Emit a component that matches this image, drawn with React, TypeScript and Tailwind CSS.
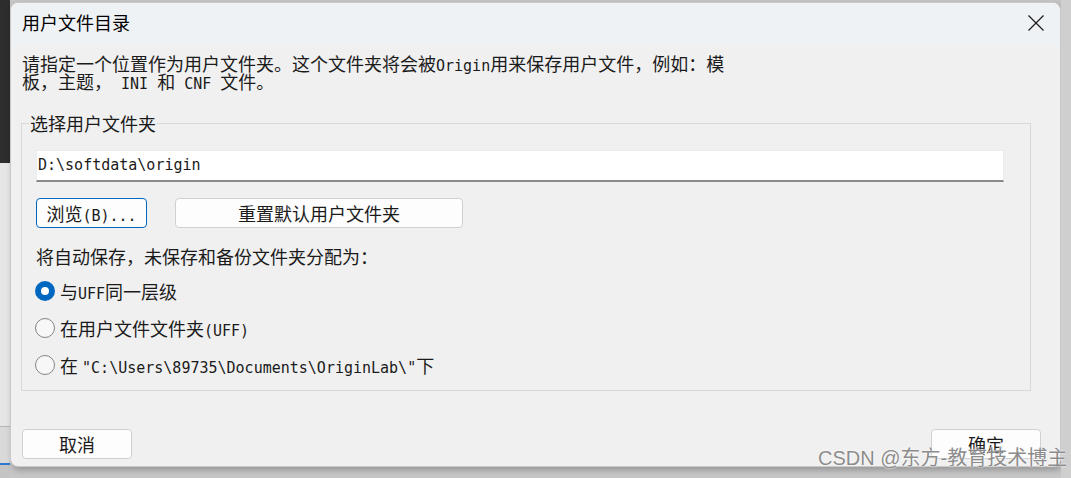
import React from 'react';

const cjk = "font-['Noto_Sans_CJK_SC','Noto_Sans_CJK_JP',sans-serif]";

// latin runs in the dialog are half-width monospace
const L = ({ children }: { children: React.ReactNode }) => (
  <span className="font-['DejaVu_Sans_Mono',monospace] text-[15px] leading-[1px]">{children}</span>
);

const Radio = ({ checked, children }: { checked?: boolean; children: React.ReactNode }) => (
  <div className="flex items-center h-[37px]">
    {checked ? (
      <div className="w-5 h-5 rounded-full bg-[#0067c0] flex items-center justify-center">
        <div className="w-[8px] h-[8px] rounded-full bg-white" />
      </div>
    ) : (
      <div className="w-5 h-5 rounded-full border border-[#858585] bg-[#f7f7f7]" />
    )}
    <span className="ml-[5px] leading-[18px]">{children}</span>
  </div>
);

const Btn = ({ children, primary, className = '' }: any) => (
  <button
    className={`h-[30px] rounded-[4px] bg-[#fdfdfd] text-[18px] leading-[18px] text-[#1b1b1b] ${
      primary ? 'border border-[#0067c0]' : 'border border-[#d0d0d0]'
    } ${className}`}
  >
    {children}
  </button>
);

export default function App() {
  return (
    <div className={`relative w-[1071px] h-[478px] overflow-hidden flex bg-[#c6c6c6] ${cjk}`}>
      {/* desktop behind the dialog */}
      <div className="w-[10px] flex flex-col shrink-0">
        <div className="h-[163px] bg-[#2d2d2d]" />
        <div className="h-[264px] bg-[#e6e6e6] border-b border-[#b5b5b5]" />
        <div className="h-[38px] bg-[#d9d9d9] border-b-2 border-[#2a7bd0]" />
        <div className="flex-1 bg-[#c4c4c4]" />
      </div>

      {/* dialog */}
      <div className="mt-[2px] w-[1051px] h-[465px] shrink-0 rounded-[8px] border border-[#c9c9c9] bg-[#f0f0f0] overflow-hidden flex flex-col shadow-[2px_3px_6px_rgba(0,0,0,0.25)] text-[#1b1b1b]">
        <div className="h-[43px] bg-[#eff2f5] flex items-center justify-between pl-[11px] pr-[16px] pb-[6px] shrink-0">
          <span className="text-[18px] leading-[18px] text-black">用户文件目录</span>
          <svg width="16" height="16" viewBox="0 0 16 16" className="mt-[2px]">
            <path d="M0.5 0.5 L15.5 15.5 M15.5 0.5 L0.5 15.5" stroke="#1a1a1a" strokeWidth="1.2" fill="none" />
          </svg>
        </div>

        <div className="flex flex-col px-[10px] pt-[8px] text-[18px] leading-[18px]">
          <p className="pl-[1px] h-[36px] leading-[18px]">
            请指定一个位置作为用户文件夹。这个文件夹将会被<L>Origin</L>用来保存用户文件，例如：模
            <br />
            板，主题，<L> INI </L>和<L> CNF </L>文件。
          </p>

          <fieldset className="mt-[24px] h-[277px] w-[1010px] border border-[#d8d8d8] px-[14px]">
            <legend className="-ml-[7px] px-[1px] h-[18px] leading-[18px]">选择用户文件夹</legend>
            <div className="mt-[18px] h-[32px] w-[968px] bg-white border border-[#ececec] border-b-2 border-b-[#8a8a8a] flex items-center pl-[1px]">
              <L>D:\softdata\origin</L>
            </div>
            <div className="mt-[16px] flex gap-[28px]">
              <Btn primary className="w-[111px]">
                浏览<L>(B)...</L>
              </Btn>
              <Btn className="w-[288px]">重置默认用户文件夹</Btn>
            </div>
            <div className="mt-[19px] h-[18px] leading-[18px]">将自动保存，未保存和备份文件夹分配为：</div>
            <div className="mt-[7px] flex flex-col -ml-[1px]">
              <Radio checked>
                与<L>UFF</L>同一层级
              </Radio>
              <Radio>
                在用户文件文件夹<L>(UFF)</L>
              </Radio>
              <Radio>
                在 <L>"C:\Users\89735\Documents\OriginLab\"</L>下
              </Radio>
            </div>
          </fieldset>

          <div className="mt-[38px] flex justify-between pl-[1px] pr-[9px]">
            <Btn className="w-[110px]">取消</Btn>
            <Btn className="w-[110px]">确定</Btn>
          </div>
        </div>
      </div>

      <div className="flex-1 bg-[#cfcfcf]" />

      {/* watermark */}
      <div className="absolute left-[818px] top-[446px] text-[20px] leading-[24px] text-[#8c8c8c] [text-shadow:0_0_2px_#ffffff,0_0_1px_#ffffff] font-['Liberation_Sans','Noto_Sans_CJK_SC',sans-serif]">
        CSDN @东方-教育技术博主
      </div>
    </div>
  );
}
